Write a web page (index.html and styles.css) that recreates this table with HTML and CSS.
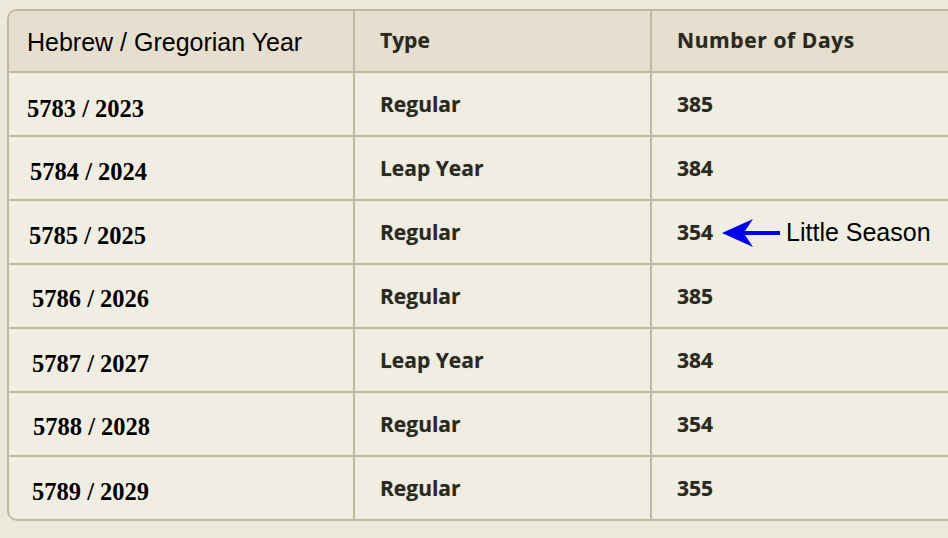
FILE: index.html
```html
<!DOCTYPE html>
<html>
<head>
<meta charset="utf-8">
<link rel="stylesheet" href="styles.css">
</head>
<body>
<div class="page">
  <table class="years">
    <thead>
      <tr>
        <th class="c1">Hebrew / Gregorian Year</th>
        <th class="c2">Type</th>
        <th class="c3">Number of Days</th>
      </tr>
    </thead>
    <tbody>
      <tr><td class="c1">5783 / 2023</td><td class="c2">Regular</td><td class="c3">385</td></tr>
      <tr><td class="c1">5784 / 2024</td><td class="c2">Leap Year</td><td class="c3">384</td></tr>
      <tr><td class="c1">5785 / 2025</td><td class="c2">Regular</td><td class="c3"><span class="note-wrap">354<svg class="arrow" width="58" height="30" viewBox="0 0 58 30"><path d="M0 15 L31 1 L23 13 L58 13 L58 17 L23 17 L31 29 Z" fill="#0000ee"/></svg><span class="note">Little Season</span></span></td></tr>
      <tr><td class="c1">5786 / 2026</td><td class="c2">Regular</td><td class="c3">385</td></tr>
      <tr><td class="c1">5787 / 2027</td><td class="c2">Leap Year</td><td class="c3">384</td></tr>
      <tr><td class="c1">5788 / 2028</td><td class="c2">Regular</td><td class="c3">354</td></tr>
      <tr><td class="c1">5789 / 2029</td><td class="c2">Regular</td><td class="c3">355</td></tr>
    </tbody>
  </table>
</div>
</body>
</html>
```
FILE: styles.css
```css
html, body {
  margin: 0;
  padding: 0;
  background: #ece8dc;
  overflow: hidden;
}
.page {
  padding: 9px 0 0 7px;
  width: 1000px;
}
.years {
  border-collapse: separate;
  border-spacing: 0;
  width: 980px;
  table-layout: fixed;
  border-top: 2px solid #c2b89f;
  border-left: 2px solid #c2b89f;
  border-radius: 10px 0 0 10px;
  background: #f0ede3;
}
.years th, .years td {
  box-sizing: border-box;
  border-bottom: 2px solid #c2b89f;
  border-right: 2px solid #c2b89f;
  text-align: left;
  vertical-align: middle;
  padding: 0;
  white-space: nowrap;
}
.years th {
  background: #e6dfcf;
  height: 62px;
}
.years thead th:first-child {
  border-top-left-radius: 9px;
}
.years tbody tr:last-child td:first-child {
  border-bottom-left-radius: 9px;
}
.years td {
  height: 64px;
}
.c1 { width: 346px; }
.c2 { width: 297px; }
th.c1 {
  font-family: "Liberation Sans", Arial, sans-serif;
  font-weight: normal;
  font-size: 25px;
  color: #000;
  padding-left: 18px;
  padding-top: 2px;
}
td.c1 {
  font-family: "Liberation Serif", "Times New Roman", serif;
  font-weight: bold;
  font-size: 24.5px;
  color: #000;
  padding-left: 21px;
  padding-top: 9px;
}
tbody tr:nth-child(1) td.c1 { padding-left: 18px; padding-top: 10px; }
tbody tr:nth-child(2) td.c1 { padding-left: 21px; padding-top: 8px; }
tbody tr:nth-child(3) td.c1 { padding-left: 20px; padding-top: 8px; }
tbody tr:nth-child(4) td.c1 { padding-left: 23px; padding-top: 6px; }
tbody tr:nth-child(5) td.c1 { padding-left: 23px; padding-top: 7px; }
tbody tr:nth-child(6) td.c1 { padding-left: 24px; padding-top: 6px; }
tbody tr:nth-child(7) td.c1 { padding-left: 23px; padding-top: 7px; }
th.c2, th.c3, td.c2, td.c3 {
  font-family: "Open Sans", sans-serif;
  font-weight: 700;
  font-size: 21px;
  color: #2a2920;
  padding-left: 25px;
  text-shadow: 0 0 1px rgba(40,40,30,0.35);
}
th.c3 { letter-spacing: 0.6px; }
th.c2, th.c3 { padding-bottom: 2px; }
td.c2, td.c3 { padding-bottom: 1px; }
.note-wrap {
  display: inline-flex;
  align-items: center;
}
.arrow {
  margin-left: 9px;
  margin-right: 6px;
  margin-top: 2px;
}
.note {
  font-family: "Liberation Sans", Arial, sans-serif;
  font-weight: normal;
  font-size: 25px;
  color: #000;
  text-shadow: none;
  margin-top: 2px;
}
```
